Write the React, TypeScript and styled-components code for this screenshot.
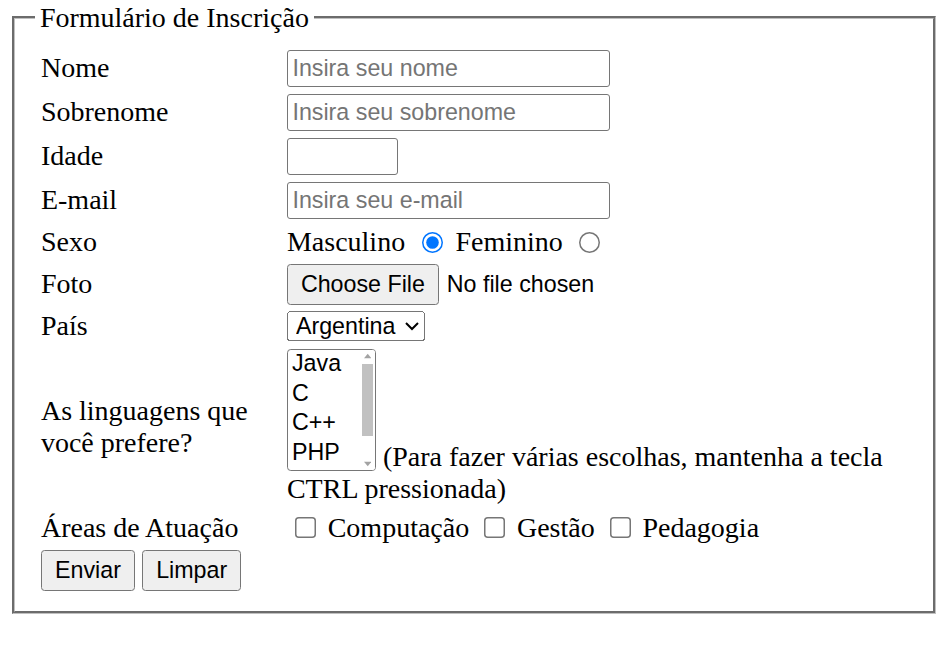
import React from "react";
import styled, { createGlobalStyle } from "styled-components";

const GlobalStyle = createGlobalStyle`
  html, body { margin: 0; padding: 0; background: #ffffff; }
  body {
    font-family: "Liberation Serif", "Times New Roman", serif;
    font-size: 16px;
    color: #000000;
  }
`;

const SANS = `"Liberation Sans", Arial, sans-serif`;

const Page = styled.div`
  zoom: 1.5;
  width: 630px;
  padding-top: 1.2px;
  box-sizing: border-box;
  font-size: 18.67px;
`;

const Fieldset = styled.fieldset`
  margin: 0 6px 0 8px;
  padding: 10.8px 12px 14px 13.3px;
  border: 2px groove rgb(192, 192, 192);
  min-inline-size: min-content;
`;

const Legend = styled.legend`
  padding: 0 3.3px;
  line-height: normal;
`;

const FormGrid = styled.div`
  display: grid;
  grid-template-columns: 164px 1fr;
  grid-template-rows: 24.67px 24.67px 24.67px 24.67px 22px 24.67px 22px 102.7px 22.6px 25.3px;
  row-gap: 4.67px;
  align-items: center;
  padding-left: 4px;
`;

const Label = styled.label`
  display: block;
  padding-right: 8px;
  line-height: normal;
`;

const Cell = styled.div<{ $span?: boolean }>`
  grid-column: ${(p) => (p.$span ? "1 / -1" : "auto")};
  line-height: normal;
`;

const TextInput = styled.input<{ $w: number }>`
  box-sizing: border-box;
  width: ${(p) => p.$w}px;
  height: 24.67px;
  padding: 1px 3px;
  font-family: ${SANS};
  font-size: 15.5px;
  border: 1px solid #767676;
  border-radius: 2px;
  display: block;
  &::placeholder { color: #757575; }
  &::-webkit-inner-spin-button, &::-webkit-outer-spin-button { -webkit-appearance: none; margin: 0; }
`;

const Radio = styled.input`
  width: 14.3px;
  height: 14.3px;
  margin: 0 3.6px 0 11px;
  vertical-align: -1px;
`;

const FileInput = styled.input`
  font-family: ${SANS};
  font-size: 15.5px;
  display: block;
  &::file-selector-button {
    font: inherit;
    padding: 2.7px 7.3px;
    margin-inline-end: 5.3px;
  }
`;

const Select = styled.select`
  font-family: ${SANS};
  font-size: 15.5px;
  color: #000000;
  display: block;
  width: 92px;
  padding-left: 1.3px;
`;

const ListBoxFrame = styled.div`
  display: inline-block;
  box-sizing: border-box;
  width: 59.3px;
  height: 81.3px;
  border: 1px solid #767676;
  border-radius: 2.5px;
  overflow: hidden;
  vertical-align: -3.3px;
  background: #ffffff;
  font-family: ${SANS};
  font-size: 15.5px;
`;

const ListBoxInner = styled.div`
  display: flex;
  height: 100%;
`;

const OptionList = styled.ul`
  flex: 1;
  margin: 0;
  padding: 0;
  list-style: none;
`;

const OptionItem = styled.li`
  height: 19.8px;
  line-height: 18px;
  padding: 0 1px 1.8px 2.7px;
  box-sizing: border-box;
  white-space: nowrap;
`;

const ScrollTrack = styled.div`
  width: 10px;
  display: flex;
  flex-direction: column;
  align-items: center;
  background: #ffffff;
`;

const ScrollArrow = styled.div`
  height: 8px;
  width: 100%;
  display: flex;
  align-items: center;
  justify-content: center;
`;

const ScrollThumb = styled.div`
  width: 7.3px;
  height: 48px;
  margin-top: 1.6px;
  background: #c1c1c1;
`;

const ScrollSpacer = styled.div`
  flex: 1;
`;

const Check = styled.input`
  width: 14.3px;
  height: 14.3px;
  margin: 0 3px 0 5.2px;
  vertical-align: -0.7px;
`;

const Button = styled.button`
  font-family: ${SANS};
  font-size: 15.5px;
  padding: 2.7px 7.4px;
`;

const Arrow = ({ down }: { down?: boolean }) => (
  <svg width="5" height="4" viewBox="0 0 5 4">
    <path d={down ? "M0 0.5 L5 0.5 L2.5 3.5 Z" : "M0 3.5 L5 3.5 L2.5 0.5 Z"} fill="#a3a3a3" />
  </svg>
);

const languages = ["Java", "C", "C++", "PHP"];

export default function App() {
  return (
    <>
      <GlobalStyle />
      <Page>
        <form onSubmit={(e) => e.preventDefault()}>
          <Fieldset>
            <Legend>Formulário de Inscrição</Legend>
            <FormGrid>
              <Label htmlFor="nome">Nome</Label>
              <Cell>
                <TextInput id="nome" type="text" $w={215.3} placeholder="Insira seu nome" />
              </Cell>

              <Label htmlFor="sobrenome">Sobrenome</Label>
              <Cell>
                <TextInput id="sobrenome" type="text" $w={215.3} placeholder="Insira seu sobrenome" />
              </Cell>

              <Label htmlFor="idade">Idade</Label>
              <Cell>
                <TextInput id="idade" type="number" $w={74} />
              </Cell>

              <Label htmlFor="email">E-mail</Label>
              <Cell>
                <TextInput id="email" type="email" $w={215.3} placeholder="Insira seu e-mail" />
              </Cell>

              <Label>Sexo</Label>
              <Cell>
                Masculino<Radio type="radio" name="sexo" value="m" defaultChecked /> Feminino
                <Radio type="radio" name="sexo" value="f" />
              </Cell>

              <Label htmlFor="foto">Foto</Label>
              <Cell>
                <FileInput id="foto" type="file" />
              </Cell>

              <Label htmlFor="pais">País</Label>
              <Cell>
                <Select id="pais" defaultValue="Argentina">
                  <option>Argentina</option>
                  <option>Brasil</option>
                  <option>Chile</option>
                  <option>Uruguai</option>
                </Select>
              </Cell>

              <Label>As linguagens que você prefere?</Label>
              <Cell>
                <ListBoxFrame role="listbox" aria-multiselectable="true">
                  <ListBoxInner>
                    <OptionList>
                      {languages.map((l) => (
                        <OptionItem key={l} role="option">
                          {l}
                        </OptionItem>
                      ))}
                    </OptionList>
                    <ScrollTrack>
                      <ScrollArrow>
                        <Arrow />
                      </ScrollArrow>
                      <ScrollThumb />
                      <ScrollSpacer />
                      <ScrollArrow>
                        <Arrow down />
                      </ScrollArrow>
                    </ScrollTrack>
                  </ListBoxInner>
                </ListBoxFrame>{" "}
                (Para fazer várias escolhas, mantenha a tecla CTRL pressionada)
              </Cell>

              <Label>Áreas de Atuação</Label>
              <Cell>
                <Check type="checkbox" /> Computação <Check type="checkbox" /> Gestão{" "}
                <Check type="checkbox" /> Pedagogia
              </Cell>

              <Cell $span>
                <Button type="submit">Enviar</Button> <Button type="reset">Limpar</Button>
              </Cell>
            </FormGrid>
          </Fieldset>
        </form>
      </Page>
    </>
  );
}
